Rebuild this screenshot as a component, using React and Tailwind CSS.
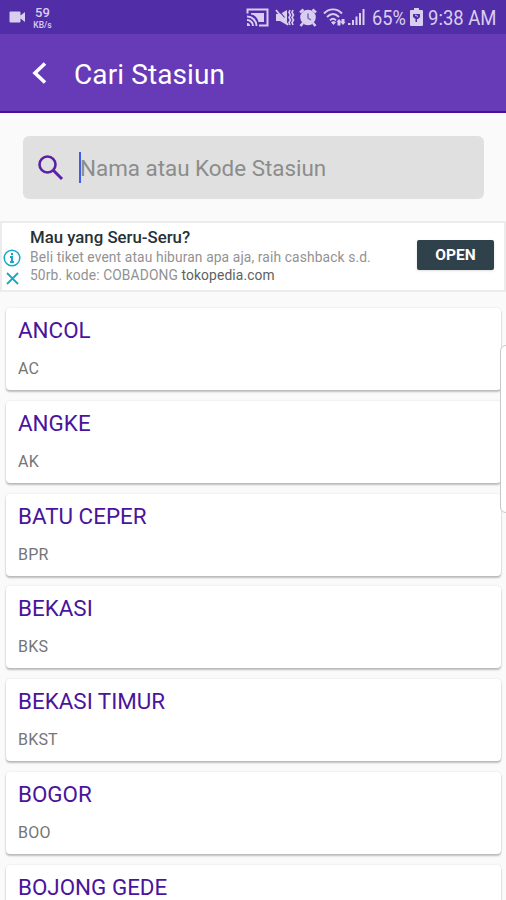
const stations = [
    { name: "ANCOL", code: "AC" },
    { name: "ANGKE", code: "AK" },
    { name: "BATU CEPER", code: "BPR" },
    { name: "BEKASI", code: "BKS" },
    { name: "BEKASI TIMUR", code: "BKST" },
    { name: "BOGOR", code: "BOO" },
    { name: "BOJONG GEDE" },
];

function StatusBar() {
    return (
        <div className="flex h-[34px] shrink-0 items-center bg-[#512da8] pl-[8px] pr-[8px] text-[#d9cdf0]">
            <svg className="h-[12px] w-[18px]" viewBox="0 0 18 12" fill="currentColor">
                <path d="M2.500 .5h9a1 1 0 0 1 1 1v3l4.500-3.500v10l-4.500-3.500v3a1 1 0 0 1-1 1h-9a1 1 0 0 1-1-1v-9a1 1 0 0 1 1-1z" />
            </svg>
            <div className="ml-[6px] flex w-[21px] flex-col items-center font-medium">
                <span className="text-[13px] leading-[15px]">59</span>
                <span className="text-[8.500px] leading-[10px]">KB/s</span>
            </div>
            <div className="ml-auto flex items-center">
                <svg className="h-[19px] w-[23px]" viewBox="0 0 23 19" fill="none" stroke="currentColor" strokeWidth="2">
                    <path d="M1.500 5.500V1.500h20v16h-8.500" />
                    <path d="M5 5h13v9h-5.500C11.500 9.500 8.500 7 5 6.500z" fill="currentColor" stroke="none" />
                    <path d="M1 8.500a9.500 9.500 0 0 1 9.500 9.500M1 12a6 6 0 0 1 6 6" />
                    <path d="M1 15a3 3 0 0 1 3 3H1z" fill="currentColor" stroke="none" />
                </svg>
                <svg className="ml-[6px] h-[19px] w-[20px]" viewBox="0 0 20 19" fill="none" stroke="currentColor">
                    <path d="M1 6h4l7-4v15l-7-4H1z" fill="currentColor" stroke="none" />
                    <path d="M3.500 2l6 7.500" stroke="#512da8" strokeWidth="1.200" />
                    <path d="M1 2l12 15" strokeWidth="1.800" />
                    <path d="M15 2l-1 2.500L15.500 7l-1.500 2.500L15.500 12l-1.500 2.500L15 17M18 2l-1 2.500L18.500 7 17 9.500l1.500 2.500-1.500 2.500 1 2.500" strokeWidth="1.600" />
                </svg>
                <svg className="ml-[4px] h-[19px] w-[18px]" viewBox="0 0 18 19" fill="none" stroke="currentColor">
                    <circle cx="9" cy="9.500" r="7.800" fill="currentColor" stroke="none" />
                    <path d="M1 4.500L4.500 1.500M13.500 1.500L17 4.500M4 15l-2.500 3M14 15l2.500 3" strokeWidth="2.500" />
                    <path d="M9 5.500v4.500l3 2" stroke="#7f66c0" strokeWidth="1.500" />
                </svg>
                <svg className="ml-[6px] h-[19px] w-[23px]" viewBox="0 0 23 19" fill="none" stroke="currentColor" strokeWidth="1.900">
                    <path d="M1 5.500c5-5.500 13-5.500 18 0M4 9c4-4 8-4 12 0M7 12.300c2-2 4-2 6 0" />
                    <path d="M10.500 17l-2.500-2.800c1.500-1.200 3.500-1.200 5 0z" fill="currentColor" stroke="none" />
                    <path d="M13.500 14l2.500-3 2.500 3h-1v3.500h-3V14zM17.500 14h1v-3h3v3h1l-2.500 3z" fill="currentColor" stroke="none" />
                </svg>
                <svg className="ml-[2px] h-[18px] w-[18px]" viewBox="0 0 18 18" fill="currentColor">
                    <path d="M0 15h2.500v2H0zM4 12h2v5H4zM7.500 8.500h2V17h-2zM11 5h2v12h-2zM14.500 1h2v16h-2z" />
                </svg>
                <span className="ml-[6px] w-[33px] origin-left scale-x-[.91] whitespace-nowrap pt-[2px] text-[20px] leading-[20px]">65%</span>
                <svg className="ml-[5px] h-[18px] w-[13px]" viewBox="0 0 13 18" fill="currentColor">
                    <path d="M4 0h5v2h3a1 1 0 0 1 1 1v14a1 1 0 0 1-1 1H1a1 1 0 0 1-1-1V3a1 1 0 0 1 1-1h3z" />
                    <path d="M3 6h7v3l-2 2H7v3H5.500v-3L3 9z" fill="#512da8" />
                    <path d="M5 7l3 1.500" stroke="currentColor" />
                </svg>
                <span className="ml-[5px] w-[70px] origin-left scale-x-[.925] whitespace-nowrap pt-[2px] text-[20px] leading-[20px]">9:38 AM</span>
            </div>
        </div>
    );
}

function AppBar() {
    return (
        <header className="flex h-[79px] shrink-0 items-center border-b-2 border-[#4a0fa0] bg-[#673ab7] pl-[32px] text-white">
            <svg className="h-[24px] w-[16px]" viewBox="0 0 16 24" fill="none" stroke="currentColor" strokeWidth="3.600">
                <path d="M13 2.500L3 12l10 9.500" />
            </svg>
            <h1 className="ml-[26px] pt-[4px] text-[28px] leading-[32px] tracking-[0.1px]">Cari Stasiun</h1>
        </header>
    );
}

function SearchBox() {
    return (
        <div className="ml-[23px] mr-[22px] mt-[23px] flex h-[63px] shrink-0 items-center rounded-[6px] bg-[#e0e0e0]">
            <svg className="ml-[15px] h-[26px] w-[26px]" viewBox="0 0 26 26" fill="none" stroke="#5b1fa8">
                <circle cx="9.500" cy="9.500" r="8" strokeWidth="2.600" />
                <path d="M15.500 15.500l8.500 8.500" strokeWidth="3" />
            </svg>
            <span className="ml-[15px] h-[31px] w-[2px] bg-[#3d5fe8]" />
            <span className="-ml-px pt-[2px] text-[22.400px] text-[#8c8c8c]">Nama atau Kode Stasiun</span>
        </div>
    );
}

function AdBanner() {
    return (
        <div className="mt-[22px] flex h-[71px] shrink-0 border-2 border-[#ececec] bg-white">
            <div className="flex w-[20px] flex-col items-center pt-[26px]">
                <svg className="h-[18px] w-[18px]" viewBox="0 0 18 18" fill="none" stroke="#16a9c4">
                    <circle cx="9" cy="9" r="7.800" strokeWidth="1.500" />
                    <path d="M9 4v2.200M7 8h2v5M7 13h4" strokeWidth="2" />
                </svg>
                <svg className="mt-[5px] h-[13px] w-[13px]" viewBox="0 0 13 13" fill="none" stroke="#16a9c4" strokeWidth="1.800">
                    <path d="M1 1l11 11M12 1L1 12" />
                </svg>
            </div>
            <div className="ml-[8px] whitespace-nowrap pt-[4px]">
                <p className="text-[16.800px] font-medium leading-[20px] text-[#263238]">Mau yang Seru-Seru?</p>
                <p className="mt-px text-[13.800px] leading-[18px] tracking-[0.120px] text-[#929292]">Beli tiket event atau hiburan apa aja, raih cashback s.d.</p>
                <p className="text-[13.800px] leading-[18px] tracking-[0.120px] text-[#929292]">
                    50rb. kode: COBADONG <span className="text-[#606060]">tokopedia.com</span>
                </p>
            </div>
            <button className="ml-auto mr-[10px] mt-[17px] h-[30px] w-[77px] rounded-[2px] bg-[#2f414a] pt-[2px] text-[15.500px] font-bold text-white shadow">
                OPEN
            </button>
        </div>
    );
}

function StationCard({ name, code }) {
    return (
        <li className="h-[82px] shrink-0 rounded-[4px] bg-white pl-[12px] pt-[7px] shadow-[0_2px_2px_rgba(0,0,0,0.24),0_0_2px_rgba(0,0,0,0.12)]">
            <p className="text-[22.400px] leading-[30px] text-[#4a149c]">{name}</p>
            {code && <p className="mt-[14px] text-[16px] leading-[20px] tracking-[0.200px] text-[#757575]">{code}</p>}
        </li>
    );
}

export default function App() {
    return (
        <div className="relative flex h-[900px] w-[506px] flex-col overflow-hidden bg-[#fafafa] font-[Roboto,sans-serif]">
            <StatusBar />
            <AppBar />
            <SearchBox />
            <AdBanner />
            <ul className="ml-[6px] mr-[5px] mt-[16px] flex flex-col gap-[10.800px]">
                {stations.map(s => <StationCard key={s.name} name={s.name} code={s.code} />)}
            </ul>
            {/* edge panel handle */}
            <div className="absolute left-[500px] top-[345px] h-[168px] w-[12px] rounded-l-[6px] border border-[#c8c8c8] bg-white" />
        </div>
    );
}
